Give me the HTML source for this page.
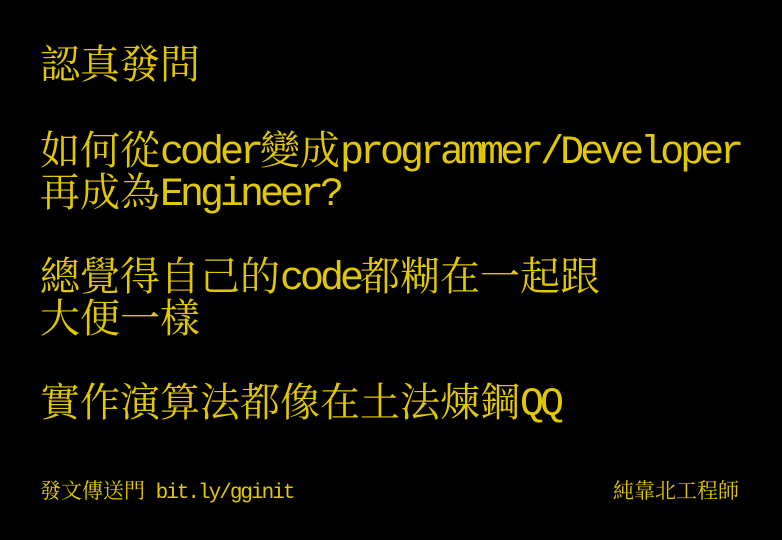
<!DOCTYPE html>
<html><head><meta charset="utf-8"><style>
html,body{margin:0;padding:0;background:#000;width:782px;height:540px;overflow:hidden}
.l{position:absolute;left:40px;white-space:nowrap;color:#e2c800;height:42px;line-height:42px}
.c{font-family:"Noto Serif CJK SC","Noto Sans CJK TC",serif;font-size:40px;letter-spacing:0}
.a{font-family:"Liberation Mono",monospace;font-size:40px;letter-spacing:-4px;position:relative;top:-1px}
.f{position:absolute;top:477px;white-space:nowrap;color:#e2c800;line-height:26px}
.fc{font-family:"Noto Serif CJK SC","Noto Sans CJK TC",serif;font-size:21px}
.fa{font-family:"Liberation Mono",monospace;font-size:21px;letter-spacing:-2px}
</style></head><body>
<div class="l" style="top:41px"><span class="c">認真發問</span></div>
<div class="l" style="top:127px"><span class="c">如何從</span><span class="a">coder</span><span class="c">變成</span><span class="a">programmer/Developer</span></div>
<div class="l" style="top:169px"><span class="c">再成為</span><span class="a">Engineer?</span></div>
<div class="l" style="top:253px"><span class="c">總覺得自己的</span><span class="a">code</span><span class="c">都糊在一起跟</span></div>
<div class="l" style="top:295px"><span class="c">大便一樣</span></div>
<div class="l" style="top:379px"><span class="c">實作演算法都像在土法煉鋼</span><span class="a">QQ</span></div>
<div class="f" style="left:40px"><span class="fc">發文傳送門</span><span class="fa"> bit.ly/gginit</span></div>
<div class="f" style="left:613px"><span class="fc">純靠北工程師</span></div>
</body></html>
